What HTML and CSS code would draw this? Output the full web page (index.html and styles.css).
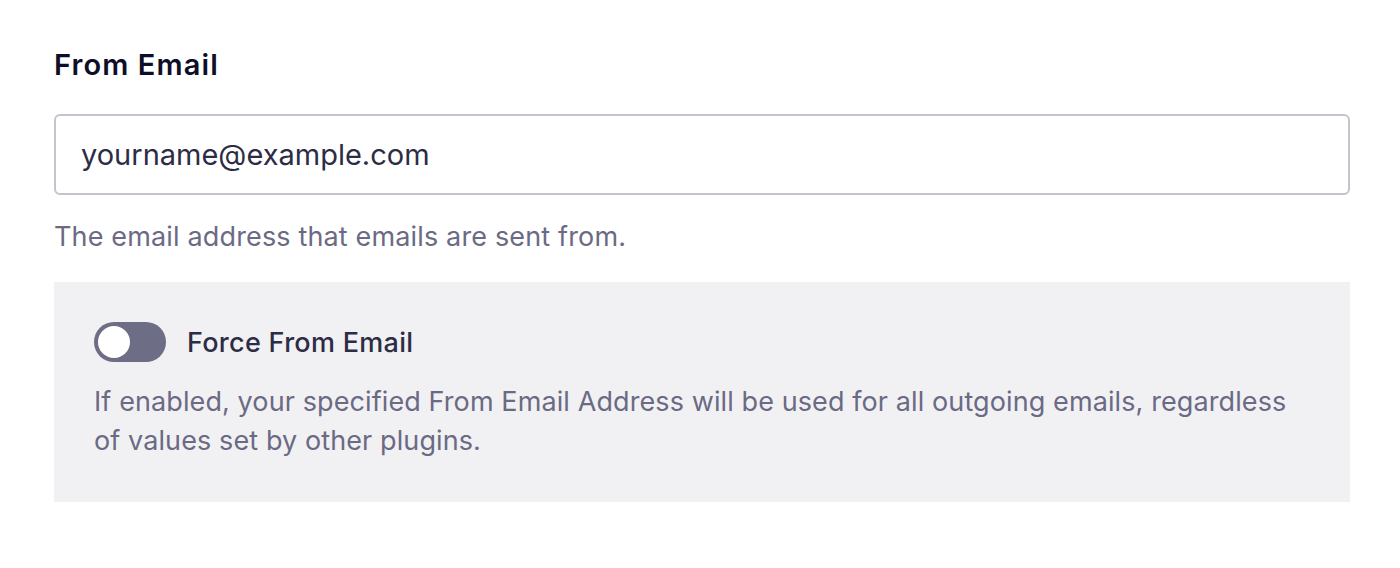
FILE: index.html
```html
<!DOCTYPE html>
<html lang="en">
<head>
    <meta charset="UTF-8">
    <meta name="viewport" content="width=device-width, initial-scale=1.0">
    <title>From Email</title>
    <link rel="stylesheet" href="styles.css">
</head>
<body>
    <div class="settings">
        <div class="field">
            <label class="field-label" for="from-email">From Email</label>
            <input type="text" id="from-email" class="text-input" value="yourname@example.com">
            <p class="field-help">The email address that emails are sent from.</p>
        </div>

        <div class="option-box">
            <div class="toggle-row">
                <span class="toggle"><span class="toggle-knob"></span></span>
                <span class="toggle-label">Force From Email</span>
            </div>
            <p class="option-help">If enabled, your specified From Email Address will be used for all outgoing emails, regardless of values set by other plugins.</p>
        </div>
    </div>
</body>
</html>
```

FILE: styles.css
```css
:root {
    --heading: #0f0e28;
    --text: #2c2c45;
    --muted: #6b6a84;
    --border: #c3c4cc;
    --panel: #f1f1f3;
    --toggle: #6e6d86;
}

body {
    font-family: 'Inter', 'Noto Sans', sans-serif;
    margin: 0;
    padding: 0;
    background: white;
}

.settings {
    width: 1296px;
    margin: 0 0 0 54px;
    padding-top: 46px;
}

.field-label {
    display: block;
    font-size: 29px;
    font-weight: 600;
    letter-spacing: 1.1px;
    color: var(--heading);
    line-height: 38px;
    margin-bottom: 30px;
}

.text-input {
    display: block;
    width: 100%;
    box-sizing: border-box;
    height: 81px;
    padding: 0 25px;
    border: 2px solid var(--border);
    border-radius: 6px;
    font-family: inherit;
    font-size: 29px;
    color: var(--text);
    outline: none;
}

.field-help {
    margin: 22px 0 0;
    font-size: 27px;
    letter-spacing: 0.15px;
    line-height: 40px;
    color: var(--muted);
}

.option-box {
    margin-top: 25px;
    background: var(--panel);
    padding: 40px 40px 42px;
}

.toggle-row {
    display: flex;
    align-items: center;
    gap: 21px;
}

.toggle {
    display: flex;
    align-items: center;
    width: 72px;
    height: 40px;
    border-radius: 20px;
    background: var(--toggle);
    padding: 0 4px;
    box-sizing: border-box;
}

.toggle-knob {
    width: 32px;
    height: 32px;
    border-radius: 50%;
    background: white;
}

.toggle-label {
    font-size: 27px;
    font-weight: 500;
    letter-spacing: 0.3px;
    color: var(--text);
}

.option-help {
    margin: 20px 0 0;
    font-size: 27px;
    letter-spacing: 0.1px;
    line-height: 39px;
    color: var(--muted);
}
```
